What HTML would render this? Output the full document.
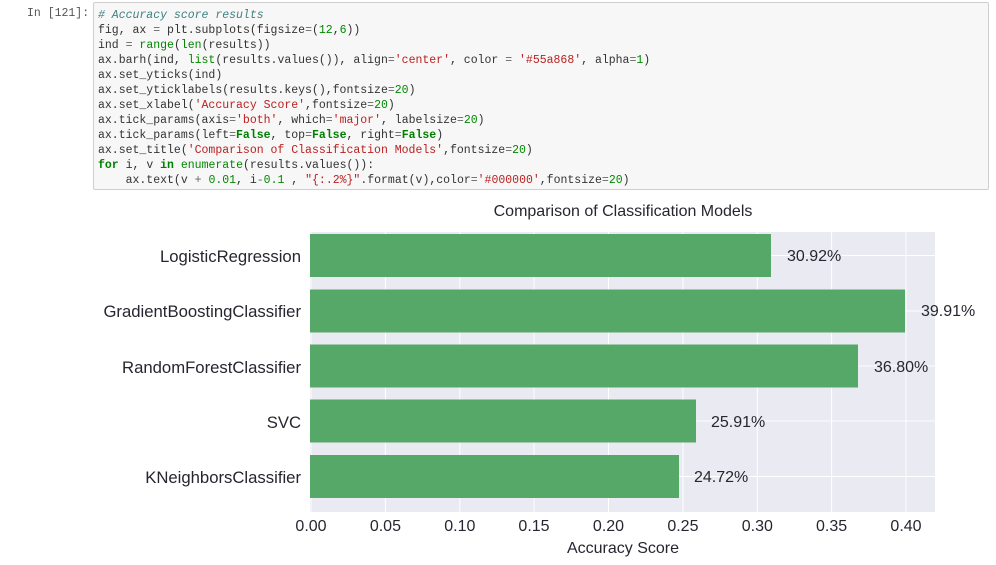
<!DOCTYPE html>
<html><head><meta charset="utf-8"><style>
body{margin:0;width:996px;height:565px;background:#fff;overflow:hidden;position:relative;font-family:"Liberation Sans",sans-serif}
.prompt{position:absolute;left:27px;top:7px;font:11.5px "Liberation Mono",monospace;color:#555}
.cell{position:absolute;left:93px;top:2px;width:896px;height:188px;background:#f7f7f7;border:1px solid #cfcfcf;border-radius:2px;box-sizing:border-box}
pre{margin:0;position:absolute;left:4px;top:5px;font:11.5px/15px "Liberation Mono",monospace;color:#333;letter-spacing:0}
.c{color:#408080;font-style:italic}.s{color:#ba2121}.k{color:#008000;font-weight:bold}.n{color:#080}.o{color:#666}
</style></head><body>
<div class="prompt">In [121]:</div>
<div class="cell"><pre><span class="c"># Accuracy score results</span>
fig, ax <span class="o">=</span> plt.subplots(figsize<span class="o">=</span>(<span class="n">12</span>,<span class="n">6</span>))
ind <span class="o">=</span> <span class="n">range</span>(<span class="n">len</span>(results))
ax.barh(ind, <span class="n">list</span>(results.values()), align<span class="o">=</span><span class="s">'center'</span>, color <span class="o">=</span> <span class="s">'#55a868'</span>, alpha<span class="o">=</span><span class="n">1</span>)
ax.set_yticks(ind)
ax.set_yticklabels(results.keys(),fontsize<span class="o">=</span><span class="n">20</span>)
ax.set_xlabel(<span class="s">'Accuracy Score'</span>,fontsize<span class="o">=</span><span class="n">20</span>)
ax.tick_params(axis<span class="o">=</span><span class="s">'both'</span>, which<span class="o">=</span><span class="s">'major'</span>, labelsize<span class="o">=</span><span class="n">20</span>)
ax.tick_params(left<span class="o">=</span><span class="k">False</span>, top<span class="o">=</span><span class="k">False</span>, right<span class="o">=</span><span class="k">False</span>)
ax.set_title(<span class="s">'Comparison of Classification Models'</span>,fontsize<span class="o">=</span><span class="n">20</span>)
<span class="k">for</span> i, v <span class="k">in</span> <span class="n">enumerate</span>(results.values()):
    ax.text(v <span class="o">+</span> <span class="n">0.01</span>, i<span class="o">-</span><span class="n">0.1</span> , <span class="s">"{:.2%}"</span>.format(v),color<span class="o">=</span><span class="s">'#000000'</span>,fontsize<span class="o">=</span><span class="n">20</span>)</pre></div>
<svg width="996" height="565" style="position:absolute;left:0;top:0" font-family="Liberation Sans, sans-serif" fill="#262630">
<rect x="310" y="232" width="625" height="280" fill="#eaeaf2"/>
<g stroke="#fff" stroke-width="1">
<line x1="311" y1="232" x2="311" y2="512"/><line x1="385.4" y1="232" x2="385.4" y2="512"/><line x1="459.8" y1="232" x2="459.8" y2="512"/><line x1="534" y1="232" x2="534" y2="512"/><line x1="608.5" y1="232" x2="608.5" y2="512"/><line x1="682.9" y1="232" x2="682.9" y2="512"/><line x1="757.3" y1="232" x2="757.3" y2="512"/><line x1="831.6" y1="232" x2="831.6" y2="512"/><line x1="906" y1="232" x2="906" y2="512"/>
<line x1="310" y1="255.5" x2="935" y2="255.5"/><line x1="310" y1="311" x2="935" y2="311"/><line x1="310" y1="366" x2="935" y2="366"/><line x1="310" y1="421" x2="935" y2="421"/><line x1="310" y1="476.5" x2="935" y2="476.5"/>
</g>
<g fill="#55a868">
<rect x="310" y="234" width="461" height="43"/>
<rect x="310" y="289.5" width="595" height="43"/>
<rect x="310" y="344.5" width="548" height="43"/>
<rect x="310" y="399.5" width="386" height="43"/>
<rect x="310" y="455" width="369" height="43"/>
</g>
<text x="623" y="216" font-size="16" text-anchor="middle">Comparison of Classification Models</text>
<g font-size="16.7" text-anchor="end">
<text x="301" y="262">LogisticRegression</text>
<text x="301" y="317">GradientBoostingClassifier</text>
<text x="301" y="373">RandomForestClassifier</text>
<text x="301" y="428">SVC</text>
<text x="301" y="483">KNeighborsClassifier</text>
</g>
<g font-size="16">
<text x="787" y="261">30.92%</text>
<text x="921" y="316">39.91%</text>
<text x="874" y="372">36.80%</text>
<text x="711" y="427">25.91%</text>
<text x="694" y="482">24.72%</text>
</g>
<g font-size="16" text-anchor="middle">
<text x="311" y="531">0.00</text><text x="385.4" y="531">0.05</text><text x="459.8" y="531">0.10</text><text x="534" y="531">0.15</text><text x="608.5" y="531">0.20</text><text x="682.9" y="531">0.25</text><text x="757.3" y="531">0.30</text><text x="831.6" y="531">0.35</text><text x="906" y="531">0.40</text>
</g>
<text x="623" y="553" font-size="16" text-anchor="middle">Accuracy Score</text>
</svg>
</body></html>
